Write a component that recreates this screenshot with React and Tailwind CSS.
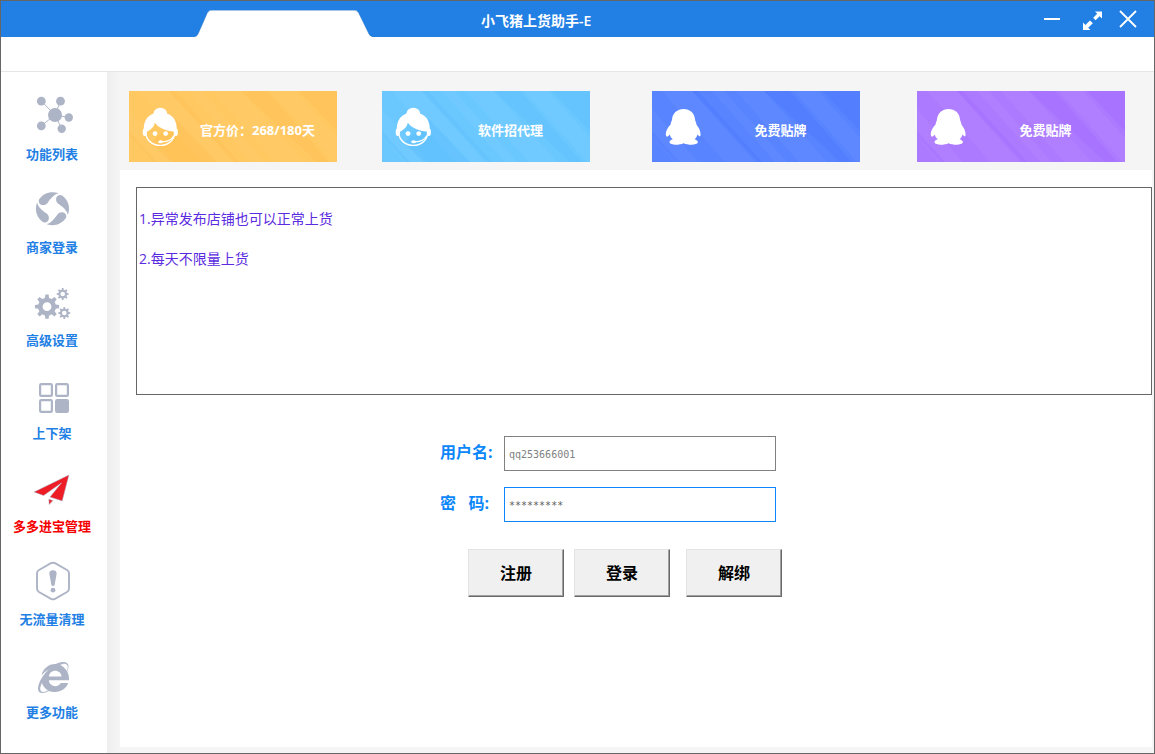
import React from "react";
import { FaInternetExplorer } from "react-icons/fa";

const CJK = "font-['Open_Sans','Noto_Sans_CJK_SC',sans-serif]";

function gearPath(cx, cy, outer, inner, hole, teeth) {
  const pts = [];
  const step = (Math.PI * 2) / teeth;
  for (let i = 0; i < teeth; i++) {
    const a = i * step - Math.PI / 2;
    [
      [-0.3, inner],
      [-0.17, outer],
      [0.17, outer],
      [0.3, inner],
    ].forEach(([t, r]) => {
      pts.push(`${(cx + r * Math.cos(a + t * step)).toFixed(2)} ${(cy + r * Math.sin(a + t * step)).toFixed(2)}`);
    });
  }
  return `M${pts.join("L")}ZM${cx - hole} ${cy}a${hole} ${hole} 0 1 0 ${hole * 2} 0a${hole} ${hole} 0 1 0 ${-hole * 2} 0Z`;
}

function NetworkIcon() {
  return (
    <>
      <path d="M27 23L13.3 9M27 23L32.5 9M27 23L41 25.5M27 23L13.3 33.7M27 23L33.7 36.7" stroke="currentColor" strokeWidth="1" />
      <circle cx="27" cy="23" r="7" />
      <circle cx="13.3" cy="9.2" r="4.4" />
      <circle cx="32.5" cy="9.2" r="4.4" />
      <circle cx="40.8" cy="25.5" r="4.2" />
      <circle cx="13.3" cy="33.8" r="4.4" />
      <circle cx="33.7" cy="36.7" r="4.2" />
    </>
  );
}

function SwirlIcon() {
  return (
    <g transform="translate(24.5 23.7)">
      {[0, 90, 180, 270].map((r) => (
        <path
          key={r}
          transform={`rotate(${r})`}
          d="M-13.2 -9.6C-9 -15.6 -1.5 -18.3 6.2 -15.4C1.5 -14.3 -1.5 -10.5 -4.6 -6.2C-7 -2.8 -11.2 -3 -13 -5.2C-14 -6.6 -14 -8.2 -13.2 -9.6Z"
        />
      ))}
    </g>
  );
}

function GearsIcon() {
  return (
    <g fillRule="evenodd">
      <path d={gearPath(19, 28.7, 12.2, 9, 4.4, 8)} />
      <path d={gearPath(34.7, 16, 6, 4.4, 2.3, 8)} />
      <path d={gearPath(36.3, 35, 6, 4.4, 2.3, 8)} />
    </g>
  );
}

function BlocksIcon() {
  return (
    <g stroke="currentColor" strokeWidth="2.2">
      <rect x="12.1" y="13.1" width="11.8" height="11.8" rx="1.2" fill="none" />
      <rect x="28.1" y="13.1" width="11.8" height="11.8" rx="1.2" fill="none" />
      <rect x="12.1" y="29.1" width="11.8" height="11.8" rx="1.2" fill="none" />
      <rect x="28.1" y="29.1" width="11.8" height="11.8" rx="1.2" />
    </g>
  );
}

function PlaneIcon() {
  return (
    <g fill="#ee1c25" stroke="#a9b3cc" strokeWidth="0.5">
      <path d="M40.9 11L6 28L15.6 31.6L33.6 18.8L22 33L34.2 36.9Z" />
      <path d="M20.8 35.2L24.8 36.6L21.2 40.6Z" />
    </g>
  );
}

function WarningIcon() {
  return (
    <>
      <path
        d="M23 6.2Q25 5.2 27 6.2L39 13Q41 14.2 41 16.2V31.8Q41 33.8 39 35L27 41.8Q25 42.8 23 41.8L11 35Q9 33.8 9 31.8V16.2Q9 14.2 11 13Z"
        fill="none"
        stroke="currentColor"
        strokeWidth="1.9"
      />
      <path d="M25 13.2C27.8 13.2 28.8 14.8 28.6 17L26.7 27.4Q26.3 29 25 29Q23.7 29 23.3 27.4L21.4 17C21.2 14.8 22.2 13.2 25 13.2Z" />
      <circle cx="25" cy="33.2" r="2.4" />
    </>
  );
}

function BrowserIcon() {
  return <FaInternetExplorer x="10" y="12" size="31" />;
}

const NAV = [
  { label: "功能列表", Icon: NetworkIcon },
  { label: "商家登录", Icon: SwirlIcon },
  { label: "高级设置", Icon: GearsIcon },
  { label: "上下架", Icon: BlocksIcon },
  { label: "多多进宝管理", Icon: PlaneIcon, active: true },
  { label: "无流量清理", Icon: WarningIcon },
  { label: "更多功能", Icon: BrowserIcon },
];

function AgentIcon() {
  return (
    <svg viewBox="0 0 36 40" className="h-10 w-9" fill="#fff" aria-hidden="true">
      <ellipse cx="18.3" cy="6.2" rx="6.8" ry="5.4" />
      <path d="M2 25C0.6 14 6 5.6 18.3 5.600C30.600 5.600 36 14 34.600 25L31.600 24.600C24.500 23.800 17 21.800 12.800 15.600C12.300 20 8.800 22.800 5 24.800Z" />
      <rect x="0.8" y="21.5" width="4" height="7.4" rx="2" />
      <rect x="31.8" y="21.5" width="4" height="7.4" rx="2" />
      <path d="M3.600 25C4 33.5 10.500 38.400 18.300 38.400C26.100 38.400 32.400 33.500 33 25" fill="none" stroke="#fff" strokeWidth="1.4" />
      <circle cx="13" cy="26.6" r="2.4" />
      <circle cx="23.7" cy="26.6" r="2.4" />
      <path d="M32 28.5C29.5 33 25 35 19.5 34.8" fill="none" stroke="#fff" strokeWidth="1.3" />
      <ellipse cx="18.6" cy="34.7" rx="2.4" ry="1.5" />
    </svg>
  );
}

function PenguinIcon() {
  return (
    <svg viewBox="0 0 36 40" className="h-10 w-9" fill="#fff" aria-hidden="true">
      <path d="M18.6 2C25 2 29.4 6.2 30 12.2C30 14 31.6 15.6 31.4 17.6C34 20.6 36.2 25.4 35.4 28.8C34.8 30.2 33.4 28.4 32.4 27.4C32 29.4 31 31 29.6 32.2C31.8 33 33.2 34 32.8 35.6C32 38.4 22.6 38.2 18.6 36.2C14.6 38.2 5.2 38.4 4.6 35.6C4.2 34 5.4 33 7.8 32.2C6.4 31 5.2 29.4 4.8 27.4C3.8 28.4 2.2 30.4 1.2 29.2C-0.4 25.6 2.6 20.8 5.6 17.6C5.4 15.6 7 14 7 12.2C7.8 6.2 12.2 2 18.6 2Z" />
    </svg>
  );
}

const CARDS = [
  { label: "官方价：268/180天", Icon: AgentIcon, cls: "bg-[#ffc860]", shade: "#ffb94a" },
  { label: "软件招代理", Icon: AgentIcon, cls: "bg-[#6bc8ff] ml-[45px]", shade: "#52b8fa" },
  { label: "免费贴牌", Icon: PenguinIcon, cls: "bg-[#5884ff] ml-[62px]", shade: "#4272ff" },
  { label: "免费贴牌", Icon: PenguinIcon, cls: "bg-[#ac7aff] ml-[57px]", shade: "#9c62ff" },
];

function CardPattern({ shade, shadow }) {
  return (
    <svg className="absolute inset-0 h-full w-full" viewBox="0 0 208 71" preserveAspectRatio="none" aria-hidden="true">
      <g fill="#fff" opacity="0.035">
        <path d="M10 0H40L103 71H73Z" />
        <path d="M60 0H72L135 71H123Z" />
        <path d="M84 0H112L175 71H147Z" />
        <path d="M142 0H166L208 47V71H205Z" />
        <path d="M0 18L46 71H22L0 46Z" />
      </g>
      <g fill={shade} opacity="0.22">
        <path d="M112 0H138L200 71H188Z" />
        <path d="M170 0H208V40Z" />
        <path d="M40 0H46L110 71H106Z" />
        <path d="M0 40L28 71H24L0 45Z" />
      </g>
      {shadow && <path d="M47 28L88 71H42L22 52Z" fill={shade} opacity="0.35" />}
    </svg>
  );
}

function NavItem({ label, Icon, active }) {
  return (
    <a
      href="#"
      className={`flex flex-col items-center gap-1 ${active ? "text-[#f50000]" : "text-[#2280e4]"}`}
    >
      <svg viewBox="0 0 48 48" className="h-12 w-12 text-[#adb4c6]" fill="currentColor" aria-hidden="true">
        <Icon />
      </svg>
      <span className="text-[13px] font-bold leading-5">{label}</span>
    </a>
  );
}

const BUTTON =
  "h-12 w-24 border border-[#e3e3e3] border-b-[#696969] border-r-[#696969] bg-[#f0f0f0] text-base font-bold text-black shadow-[inset_-1px_-1px_0_#a0a0a0]";
const FIELD =
  "h-[35px] w-[272px] border bg-white px-1 pt-0.5 font-['DejaVu_Sans_Mono',monospace] text-[10px] text-[#808080] outline-none placeholder:text-[#606060]";
const LABEL = "w-16 whitespace-pre pb-1 text-base font-bold leading-6 text-[#0b87fa]";

export default function App() {
  return (
    <div className={`flex min-h-screen flex-col border border-[#666] bg-white ${CJK}`}>
      <header className="flex h-9 items-end bg-[#2280e4] text-white">
        <svg viewBox="0 0 180 27" className="ml-[193px] h-[27px] w-[180px] shrink-0" aria-hidden="true">
          <path d="M0 27Q3 26.5 4 24L13 3.5Q14.5 0 17 0H161Q163.5 0 165 3.5L175 24Q176 26.5 180 27Z" fill="#fff" />
          <path d="M0 26.8Q3 26.5 4 24L13 3.5Q14.5 0.3 17 0.3H161Q163.5 0.3 165 3.5L175 24Q176 26.5 180 26.8" fill="none" stroke="#1c6cc2" strokeWidth="0.5" />
        </svg>
        <h1 className="ml-[107px] self-center pt-1 text-sm font-semibold leading-5">小飞猪上货助手-E</h1>
        <div className="ml-auto mr-4 flex items-center gap-5 self-center">
          <button type="button" aria-label="最小化" className="flex h-6 w-5 items-center justify-center">
            <svg viewBox="0 0 20 24" className="h-6 w-5" aria-hidden="true">
              <path d="M2 12H18" stroke="#fff" strokeWidth="2" />
            </svg>
          </button>
          <button type="button" aria-label="最大化" className="flex h-6 w-5 items-center justify-center">
            <svg viewBox="0 0 20 24" className="h-6 w-5" fill="#fff" aria-hidden="true">
              <path d="M13 4.4H20V11.4L17.6 9.2L13.6 13.2L11.2 10.8L15.2 6.8Z" />
              <path d="M1 15.6V23H8.4L6.2 20.8L10.8 16.2L8 13.4L3.4 18Z" />
            </svg>
          </button>
          <button type="button" aria-label="关闭" className="-ml-1 flex h-6 w-5 items-center justify-center">
            <svg viewBox="0 0 20 24" className="h-6 w-5" aria-hidden="true">
              <path d="M2 4L18 20M18 4L2 20" stroke="#fff" strokeWidth="1.8" />
            </svg>
          </button>
        </div>
      </header>
      <div className="h-[35px] border-b border-[#e6e6e6] bg-white" />

      <div className="flex flex-1">
        <nav className="flex w-[106px] shrink-0 flex-col gap-[21px] bg-white pb-4 pr-1 pt-5">
          {NAV.map((item) => (
            <NavItem key={item.label} {...item} />
          ))}
        </nav>
        <div className="w-[13px] shrink-0 bg-linear-to-r from-[#eeeeee] to-[#f5f5f5]" />

        <main className="flex min-w-0 flex-1 flex-col bg-[#f5f5f5] pb-1.5 pr-0.5">
          <div className="flex px-[9px] pb-2 pt-[19px]">
            {CARDS.map(({ label, Icon, cls, shade }, i) => (
              <a
                key={i}
                href="#"
                className={`relative flex h-[71px] w-[208px] shrink-0 items-center overflow-hidden text-white ${cls}`}
              >
                <CardPattern shade={shade} shadow={i < 2} />
                <span className="relative ml-[13px] shrink-0">
                  <Icon />
                </span>
                <span className="relative flex-1 pt-1.5 text-center text-[13px] font-bold leading-5">{label}</span>
              </a>
            ))}
          </div>

          <div className="flex-1 bg-white pl-4 pt-[17px]">
            <section className="h-52 border border-[#666] px-0.5 pt-[11px] text-sm leading-10 text-[#5b2be0]">
              <p>1.异常发布店铺也可以正常上货</p>
              <p>2.每天不限量上货</p>
            </section>

            <form className="ml-[304px] mt-[41px]" onSubmit={(e) => e.preventDefault()}>
              <div className="flex items-center">
                <label htmlFor="username" className={LABEL}>
                  用户名:
                </label>
                <input id="username" type="text" defaultValue="qq253666001" className={`${FIELD} border-[#808080]`} />
              </div>
              <div className="mt-4 flex items-center">
                <label htmlFor="password" className={LABEL}>
                  {"密   码:"}
                </label>
                <input id="password" type="password" placeholder="*********" className={`${FIELD} border-[#0b87fa]`} />
              </div>
              <div className="ml-7 mt-[27px] flex">
                <button type="submit" className={BUTTON}>注册</button>
                <button type="submit" className={`${BUTTON} ml-2.5`}>登录</button>
                <button type="button" className={`${BUTTON} ml-4`}>解绑</button>
              </div>
            </form>
          </div>
        </main>
      </div>
    </div>
  );
}
